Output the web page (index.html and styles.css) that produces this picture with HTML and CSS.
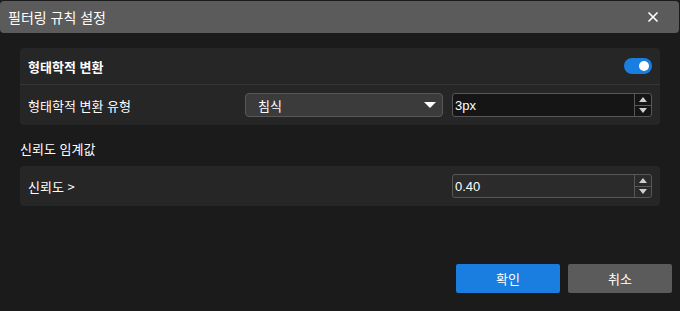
FILE: index.html
```html
<!DOCTYPE html>
<html lang="ko">
<head>
    <meta charset="UTF-8">
    <title>필터링 규칙 설정</title>
    <link rel="stylesheet" href="styles.css">
</head>
<body>
    <div class="dialog">
        <div class="title-bar">
            <span class="title">필터링 규칙 설정</span>
            <svg class="close" width="12" height="12" viewBox="0 0 12 12">
                <path d="M1.5 1.5 L10.5 10.5 M10.5 1.5 L1.5 10.5" stroke="#ffffff" stroke-width="1.6" fill="none"/>
            </svg>
        </div>

        <div class="content">
            <div class="panel">
                <div class="panel-header">
                    <span class="panel-title">형태학적 변환</span>
                    <div class="toggle"><div class="knob"></div></div>
                </div>
                <div class="row">
                    <span class="label">형태학적 변환 유형</span>
                    <div class="select">
                        <span>침식</span>
                        <svg width="12" height="8" viewBox="0 0 12 8"><path d="M0 1 L12 1 L6 7 Z" fill="#ffffff"/></svg>
                    </div>
                    <div class="spin dark">
                        <span class="value">3px</span>
                        <div class="arrows">
                            <div class="arrow"><svg width="8" height="5" viewBox="0 0 8 5"><path d="M0 5 L8 5 L4 0 Z" fill="#cfcfcf"/></svg></div>
                            <div class="arrow"><svg width="8" height="5" viewBox="0 0 8 5"><path d="M0 0 L8 0 L4 5 Z" fill="#cfcfcf"/></svg></div>
                        </div>
                    </div>
                </div>
            </div>

            <div class="section-label">신뢰도 임계값</div>

            <div class="panel">
                <div class="row">
                    <span class="label">신뢰도 &gt;</span>
                    <div class="spin">
                        <span class="value">0.40</span>
                        <div class="arrows">
                            <div class="arrow"><svg width="8" height="5" viewBox="0 0 8 5"><path d="M0 5 L8 5 L4 0 Z" fill="#cfcfcf"/></svg></div>
                            <div class="arrow"><svg width="8" height="5" viewBox="0 0 8 5"><path d="M0 0 L8 0 L4 5 Z" fill="#cfcfcf"/></svg></div>
                        </div>
                    </div>
                </div>
            </div>
        </div>

        <div class="footer">
            <button class="btn primary">확인</button>
            <button class="btn">취소</button>
        </div>
    </div>
</body>
</html>
```

FILE: styles.css
```css
body, html {
    margin: 0;
    padding: 0;
    background-color: #1b1b1b;
    font-family: "Noto Sans CJK KR", "Noto Sans", sans-serif;
    color: #ffffff;
}

.dialog {
    width: 680px;
    height: 311px;
    display: flex;
    flex-direction: column;
    box-sizing: border-box;
}

.title-bar {
    margin: 1px 1px 0 0;
    height: 32px;
    background-color: #5b5b5b;
    border-radius: 4px;
    display: flex;
    align-items: center;
    justify-content: space-between;
    padding: 0 20px 0 8px;
}

.title {
    font-size: 14px;
}

.content {
    flex: 1;
    padding: 15px 20px 0 20px;
}

.panel {
    background-color: #262626;
    border-radius: 4px;
}

.panel-header {
    height: 36px;
    display: flex;
    align-items: center;
    justify-content: space-between;
    padding: 0 8px;
    border-bottom: 1px solid #353535;
}

.panel-title {
    font-size: 13px;
    font-weight: bold;
}

.toggle {
    width: 28px;
    height: 16px;
    border-radius: 8px;
    background-color: #1a7de0;
    display: flex;
    align-items: center;
    justify-content: flex-end;
    padding: 0 3px;
    box-sizing: border-box;
}

.knob {
    width: 10px;
    height: 10px;
    border-radius: 50%;
    background-color: #ffffff;
}

.row {
    height: 40px;
    display: flex;
    align-items: center;
    padding: 0 8px;
}

.label {
    font-size: 13px;
    flex: 1;
}

.select {
    width: 198px;
    height: 24px;
    box-sizing: border-box;
    background-color: #3b3b3b;
    border: 1px solid #575757;
    border-radius: 4px;
    display: flex;
    align-items: center;
    justify-content: space-between;
    padding: 0 6px 0 12px;
    font-size: 13px;
    margin-right: 9px;
}

.spin {
    width: 200px;
    height: 24px;
    box-sizing: border-box;
    background-color: #2b2b2b;
    border: 1px solid #575757;
    border-radius: 3px;
    display: flex;
    align-items: center;
    font-family: "Liberation Sans", sans-serif;
    font-size: 13px;
}

.spin.dark {
    background-color: #151515;
}

.value {
    flex: 1;
    padding-left: 2px;
}

.arrows {
    width: 16px;
    height: 100%;
    border-left: 1px solid #575757;
    display: flex;
    flex-direction: column;
}

.arrow {
    flex: 1;
    display: flex;
    align-items: center;
    justify-content: center;
}

.arrow:first-child {
    border-bottom: 1px solid #575757;
}

.section-label {
    font-size: 13px;
    line-height: 18px;
    margin: 15px 0 8px 0;
}

.footer {
    display: flex;
    justify-content: flex-end;
    gap: 8px;
    padding: 0 8px 18px 0;
}

.btn {
    width: 104px;
    height: 29px;
    border: none;
    border-radius: 2px;
    background-color: #5b5b5b;
    color: #ffffff;
    font-family: "Noto Sans CJK KR", sans-serif;
    font-size: 13px;
}

.btn.primary {
    background-color: #1a7de0;
}
```
